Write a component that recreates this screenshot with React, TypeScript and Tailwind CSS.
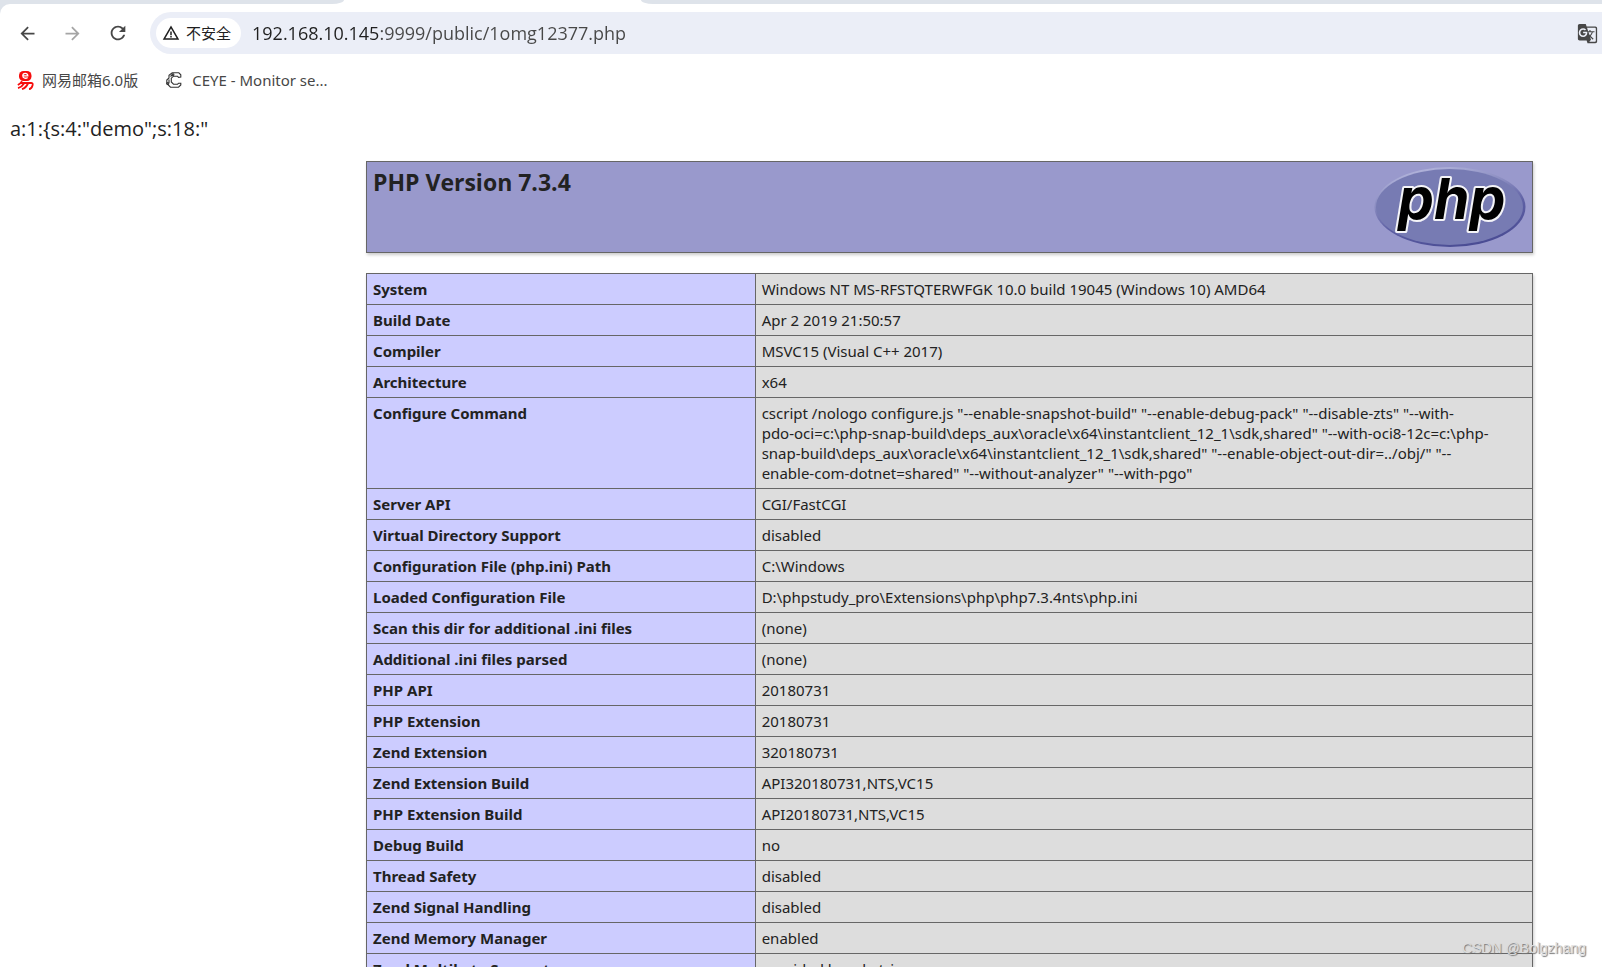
import React from 'react';
import { MdArrowBack, MdArrowForward, MdGTranslate, MdRefresh, MdWarningAmber } from 'react-icons/md';

const url = '192.168.10.145:9999/public/1omg12377.php';

const rows = [
  { name: 'System', value: 'Windows NT MS-RFSTQTERWFGK 10.0 build 19045 (Windows 10) AMD64' },
  { name: 'Build Date', value: 'Apr 2 2019 21:50:57' },
  { name: 'Compiler', value: 'MSVC15 (Visual C++ 2017)' },
  { name: 'Architecture', value: 'x64' },
  {
    name: 'Configure Command',
    value:
      'cscript /nologo configure.js "--enable-snapshot-build" "--enable-debug-pack" "--disable-zts" "--with-\npdo-oci=c:\\php-snap-build\\deps_aux\\oracle\\x64\\instantclient_12_1\\sdk,shared" "--with-oci8-12c=c:\\php-\nsnap-build\\deps_aux\\oracle\\x64\\instantclient_12_1\\sdk,shared" "--enable-object-out-dir=../obj/" "--\nenable-com-dotnet=shared" "--without-analyzer" "--with-pgo"',
  },
  { name: 'Server API', value: 'CGI/FastCGI' },
  { name: 'Virtual Directory Support', value: 'disabled' },
  { name: 'Configuration File (php.ini) Path', value: 'C:\\Windows' },
  { name: 'Loaded Configuration File', value: 'D:\\phpstudy_pro\\Extensions\\php\\php7.3.4nts\\php.ini' },
  { name: 'Scan this dir for additional .ini files', value: '(none)' },
  { name: 'Additional .ini files parsed', value: '(none)' },
  { name: 'PHP API', value: '20180731' },
  { name: 'PHP Extension', value: '20180731' },
  { name: 'Zend Extension', value: '320180731' },
  { name: 'Zend Extension Build', value: 'API320180731,NTS,VC15' },
  { name: 'PHP Extension Build', value: 'API20180731,NTS,VC15' },
  { name: 'Debug Build', value: 'no' },
  { name: 'Thread Safety', value: 'disabled' },
  { name: 'Zend Signal Handling', value: 'disabled' },
  { name: 'Zend Memory Manager', value: 'enabled' },
  { name: 'Zend Multibyte Support', value: 'provided by mbstring' },
];

const MailIcon = () => (
  <svg viewBox="0 0 17 19" className="h-[19px] w-[17px]" fill="none" stroke="#f60d0d" aria-hidden="true">
    <rect x="2" y="0" width="12.500" height="10" rx="4.500" fill="#f60d0d" stroke="none" />
    <path d="M5.800 4.800h5c0-3.200-5-3.200-5 0 0 2.800 3.400 2.900 4.800 1.600" stroke="#fff" strokeWidth="1.300" />
    <path d="M5 10.200C4 12 2.500 13.200.8 14M3.500 12h10.500c1.500 0 2 .8 1.600 2.200-.5 2-1.600 3.800-3.600 3.900M7 12.500C5.500 15 3.500 16.500 1 17.200M11 12.500c-1.400 3-3.400 4.800-6 5.600" strokeWidth="1.800" />
  </svg>
);

const CeyeIcon = () => (
  <svg viewBox="0 0 16 16" className="size-4" fill="none" stroke="#333" strokeWidth="1.100" aria-hidden="true">
    <path d="M14.800 5V2.800L12.800.8H6.200L3 3.200V6L.8 8v3.500L4.500 15.200h8l2.300-2.200v-1.800h-2.200l-1 1H7.500L5.300 10V6.200l2.200-2h4l1 1.200z" />
    <path d="M4.500 4.500 6.500 2.500M3 7.500v3.500" />
    <circle cx="1.800" cy="11.500" r="1" />
    <circle cx="7" cy="2.800" r="0.900" />
  </svg>
);

const PhpLogo = () => (
  <svg viewBox="0 0 152 82" className="h-[82px] w-[152px] shrink-0 overflow-visible" role="img" aria-label="PHP logo">
    <defs>
      <linearGradient id="rim" x1="0.3" y1="0" x2="0.7" y2="1">
        <stop offset="0" stopColor="#b4b6dc" />
        <stop offset="0.35" stopColor="#8688be" />
        <stop offset="0.6" stopColor="#5e60a4" />
        <stop offset="1" stopColor="#484a92" />
      </linearGradient>
    </defs>
    <ellipse cx="76" cy="41" rx="75.500" ry="40" fill="url(#rim)" />
    <ellipse cx="75.500" cy="41" rx="73.500" ry="38" fill="#777bb3" />
    <text
      x="24"
      y="53"
      className="font-['Inter',sans-serif] text-[57px] font-bold italic"
      fill="#000"
      stroke="#f4f4f8"
      strokeWidth="4"
      strokeLinejoin="round"
      paintOrder="stroke"
    >
      php
    </text>
  </svg>
);

const BrowserBar: React.FC = () => (
  <header className="bg-[#dee3ea] text-[#474747]">
    <div className="flex h-1 bg-white">
      <div className="w-[344px] rounded-br-[12px_4px] bg-[#dee3ea]" />
      <div className="w-[297px]" />
      <div className="flex-1 rounded-bl-[12px_4px] bg-[#dee3ea]" />
    </div>
    <div className="rounded-tl-[10px] bg-white">
      <div className="flex items-center pt-2">
        <nav className="flex w-[150px] items-center gap-6 pl-[17px]">
          <button type="button" aria-label="Back"><MdArrowBack size={21} /></button>
          <button type="button" aria-label="Forward" disabled className="text-[#a5a5a5]">
            <MdArrowForward size={21} />
          </button>
          <button type="button" aria-label="Reload"><MdRefresh size={22} /></button>
        </nav>
        <div className="flex h-[42px] flex-1 items-center rounded-l-full bg-[#ebeef7] pr-1 pl-1.5">
          <button type="button" className="flex h-[30px] items-center gap-1.5 rounded-full bg-white pr-2.5 pl-1.5 text-[15px] text-[#1f1f1f]">
            <MdWarningAmber size={18} />
            不安全
          </button>
          <input
            type="text"
            aria-label="Address"
            defaultValue={url}
            className="ml-[11px] min-w-0 flex-1 bg-[linear-gradient(90deg,#1f1f1f_128px,#474747_128px)] bg-clip-text text-[18px] text-transparent outline-none"
          />
          <button type="button" aria-label="Translate this page"><MdGTranslate size={21} /></button>
        </div>
      </div>
      <div className="flex h-[52px] items-center gap-7 pl-[17px] font-['Noto_Sans','Noto_Sans_CJK_SC',sans-serif] text-[15px]">
        <a href="#mail" className="flex items-center gap-2"><MailIcon />网易邮箱6.0版</a>
        <a href="#ceye" className="flex items-center gap-2.5"><CeyeIcon />CEYE - Monitor se...</a>
      </div>
    </div>
  </header>
);

const App: React.FC = () => {
  return (
    <div className="relative h-screen overflow-hidden bg-white font-['Open_Sans','Noto_Sans_CJK_SC',sans-serif] text-[#222]">
      <BrowserBar />
      <main>
        <p className="pt-2 pl-2.5 text-[20px] leading-[30px]">a:1:&#123;s:4:"demo";s:18:"</p>
        <div className="mt-[17px] mr-[69px] ml-[366px]">
          <div className="flex justify-between border border-[#666] bg-[#9999cc] px-1.5 py-1 shadow-[1px_2px_3px_#ccc]">
            <h1 className="text-[23px] leading-8 font-bold">PHP Version 7.3.4</h1>
            <PhpLogo />
          </div>
          <table className="mt-5 w-full table-fixed border-collapse text-left font-['Noto_Sans',sans-serif] text-[15px] leading-5 shadow-[1px_2px_3px_#ccc]">
            <tbody>
              {rows.map(row => (
                <tr key={row.name} className="align-top">
                  <th scope="row" className="w-1/3 border border-[#666] bg-[#ccccff] px-1.5 py-[5px] font-bold">
                    {row.name}
                  </th>
                  <td className="border border-[#666] bg-[#dddddd] px-1.5 py-[5px] whitespace-pre-line">{row.value}</td>
                </tr>
              ))}
            </tbody>
          </table>
        </div>
      </main>
      <div className="absolute right-4 bottom-2 font-['Liberation_Sans',sans-serif] text-[14px] text-[#ddd] [text-shadow:1px_1px_1px_#777]">CSDN @Bolgzhang</div>
    </div>
  );
};

export default App;
